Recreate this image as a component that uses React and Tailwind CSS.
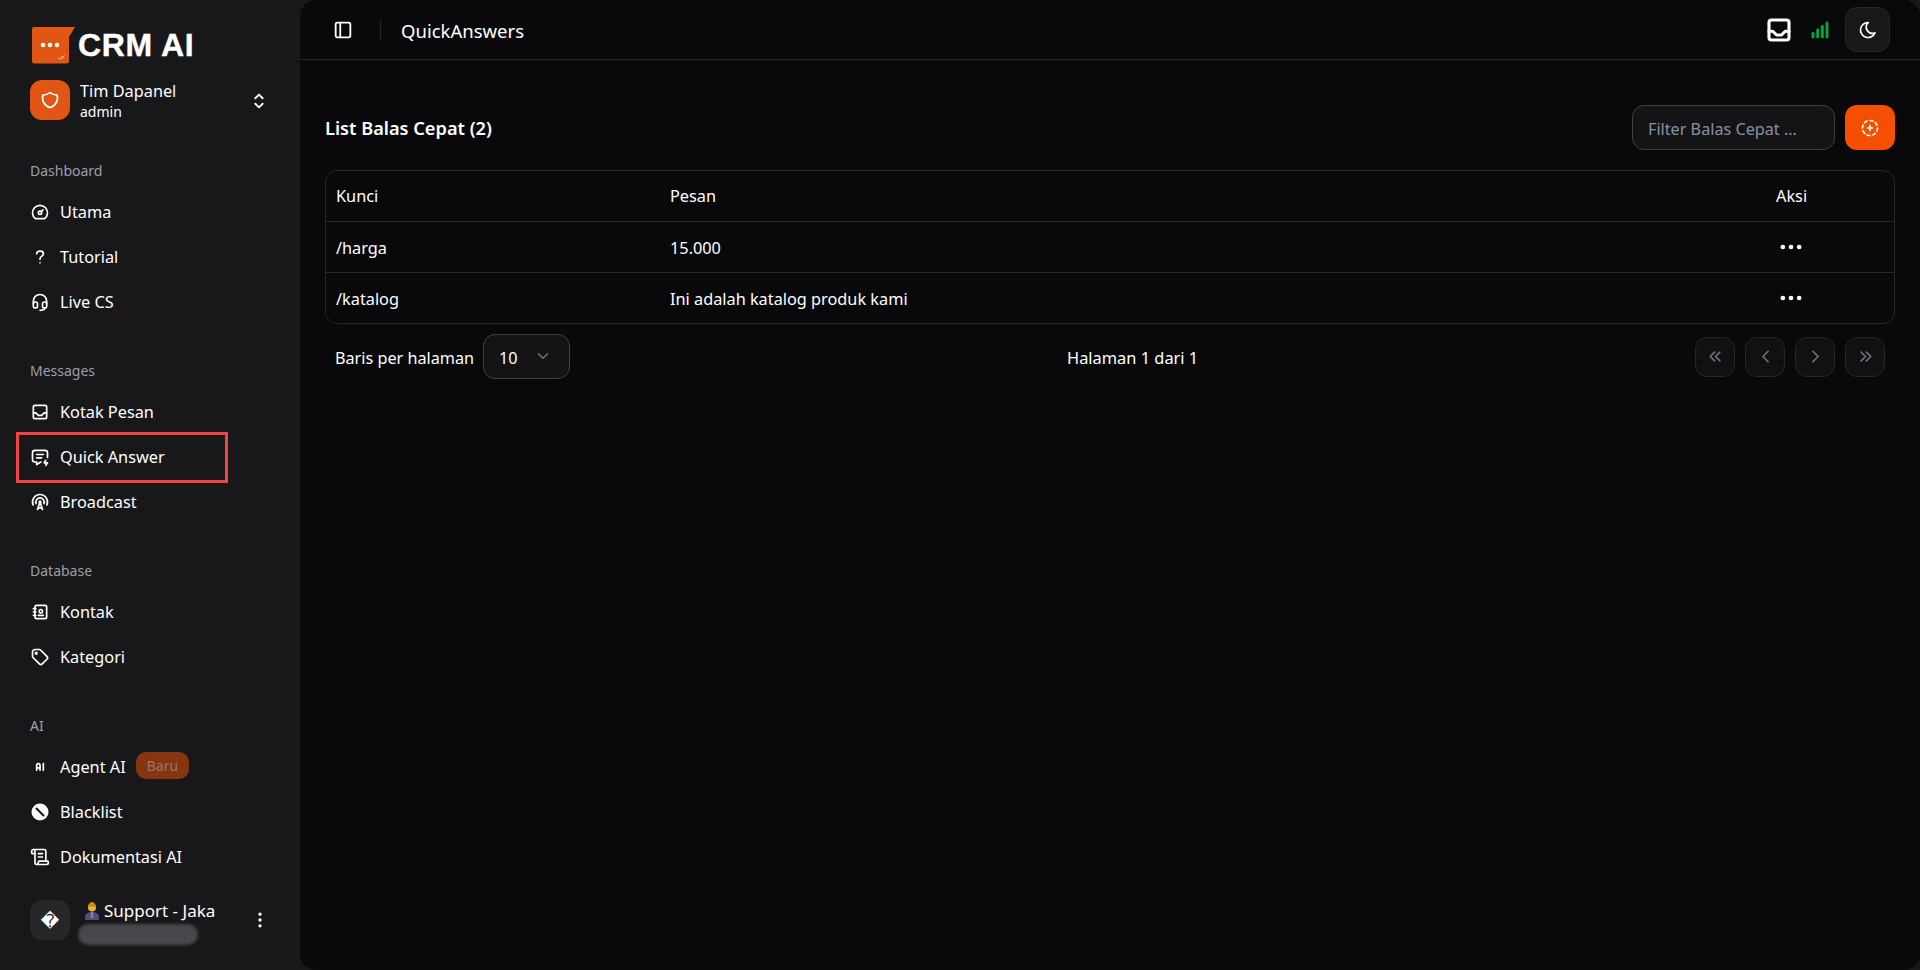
import {
  TbDashboard, TbQuestionMark, TbHeadset, TbInbox, TbMessageBolt, TbBuildingBroadcastTower, TbAddressBook, TbTag, TbAi,
  TbSelector, TbDotsVertical, TbDots, TbLayoutSidebar, TbAntennaBars5, TbMoon, TbCircleDashedPlus,
  TbChevronDown, TbChevronLeft, TbChevronRight, TbChevronsLeft, TbChevronsRight,
} from "react-icons/tb";
import { ScrollText } from "lucide-react";

function BlockedIcon({ className }) {
  return (
    <svg viewBox="0 0 20 20" className={className}>
      <circle cx="10" cy="10" r="8.500" fill="white" />
      <path d="M6.500 6.500 13.500 13.500" stroke="#18181b" strokeWidth="2" strokeLinecap="round" />
    </svg>
  );
}

function LogoMark() {
  return (
    <svg viewBox="0 0 43 37" className="w-[43px] h-[37px] shrink-0">
      <path d="M2 0H43L37 10V34a2.500 2.500 0 0 1-2.500 2.500H2.500A2.500 2.500 0 0 1 0 34V2a2 2 0 0 1 2-2Z" fill="#e05612" />
      <circle cx="11" cy="18" r="2.300" fill="white" />
      <circle cx="18" cy="18" r="2.300" fill="white" />
      <circle cx="25" cy="18" r="2.300" fill="white" />
      <path d="M26 31l1.500 1.500 3-3.500M29.500 32l3-3.500" stroke="#f3c9b0" strokeWidth="0.9" fill="none" />
    </svg>
  );
}

function WorkerEmoji() {
  return (
    <svg viewBox="0 0 16 18" className="w-[16px] h-[18px] shrink-0">
      <path d="M1 18v-3c0-3 3-5 7-5s7 2 7 5v3Z" fill="#5b4a78" />
      <path d="M7 10h2l.500 6h-3Z" fill="#8d7fa8" />
      <circle cx="8" cy="5.500" r="4" fill="#f0b429" />
      <path d="M4 5c0-3 2-5 4-5s4 2 4 5c-2 0-6-1-8 0Z" fill="#c98a16" />
    </svg>
  );
}

function NavItem({ icon: Icon, label, badge, marked }) {
  return (
    <div className="relative flex items-center gap-[10px] h-[37px] text-white text-[16.3px]">
      <Icon className="w-[20px] h-[20px] shrink-0 -translate-y-px" />
      <span>{label}</span>
      {badge && (
        <span className="px-[11px] h-[27px] flex items-center rounded-[10px] bg-[#86350f] text-[#94776a] text-[14px] -translate-y-[2px]">
          {badge}
        </span>
      )}
      {marked && <div className="absolute left-[-14px] top-[-7px] w-[212px] h-[51px] border-[3px] border-[#ef4444]" />}
    </div>
  );
}

function NavGroup({ title, children }) {
  return (
    <div>
      <div className="h-[20px] flex items-center text-[14px] text-[#9f9fa9]">{title}</div>
      <div className="mt-[14px] flex flex-col gap-2">{children}</div>
    </div>
  );
}

function PageButton({ icon: Icon }) {
  return (
    <button className="w-[40px] h-[40px] flex items-center justify-center rounded-xl border border-[#27272a] bg-[#111113] text-[#71717b]">
      <Icon className="w-[21px] h-[21px]" />
    </button>
  );
}

export default function App() {
  return (
    <div className="h-[970px] flex bg-[#18181b] text-white overflow-hidden font-['Noto_Sans','Open_Sans',sans-serif]">
      <aside className="w-[300px] shrink-0 px-[30px] flex flex-col">
        <div className="pt-[27px] pl-[2px] flex items-center gap-[3px]">
          <LogoMark />
          <span className="font-['Liberation_Sans',sans-serif] font-bold text-[32px] leading-[37px] tracking-[0.6px] [-webkit-text-stroke:0.4px_white]">CRM AI</span>
        </div>

        <div className="mt-[16px] flex items-center">
          <div className="w-[40px] h-[40px] rounded-xl bg-[#e05612] flex items-center justify-center">
            <svg viewBox="0 0 24 24" className="w-[20px] h-[20px]" fill="none" stroke="white" strokeWidth="2" strokeLinejoin="round">
              <path d="M12 3a12 12 0 0 0 8.500 3A12 12 0 0 1 12 21 12 12 0 0 1 3.500 6 12 12 0 0 0 12 3Z" />
            </svg>
          </div>
          <div className="ml-[10px] flex-1 translate-y-px">
            <div className="text-[16.3px] leading-[21px]">Tim Dapanel</div>
            <div className="text-[14px] leading-[19px]">admin</div>
          </div>
          <TbSelector className="w-[22px] h-[22px] translate-y-px" />
        </div>

        <div className="mt-[40px] flex flex-col gap-[39px]">
          <NavGroup title="Dashboard">
            <NavItem icon={TbDashboard} label="Utama" />
            <NavItem icon={TbQuestionMark} label="Tutorial" />
            <NavItem icon={TbHeadset} label="Live CS" />
          </NavGroup>
          <NavGroup title="Messages">
            <NavItem icon={TbInbox} label="Kotak Pesan" />
            <NavItem icon={TbMessageBolt} label="Quick Answer" marked />
            <NavItem icon={TbBuildingBroadcastTower} label="Broadcast" />
          </NavGroup>
          <NavGroup title="Database">
            <NavItem icon={TbAddressBook} label="Kontak" />
            <NavItem icon={TbTag} label="Kategori" />
          </NavGroup>
          <NavGroup title="AI">
            <NavItem icon={TbAi} label="Agent AI" badge="Baru" />
            <NavItem icon={BlockedIcon} label="Blacklist" />
            <NavItem icon={ScrollText} label="Dokumentasi AI" />
          </NavGroup>
        </div>

        <div className="mt-auto mb-[25px] flex items-start">
          <div className="w-[40px] h-[40px] rounded-xl bg-[#27272a] flex items-center justify-center text-[18px] font-['DejaVu_Sans',sans-serif]">
            �
          </div>
          <div className="ml-[8px] flex-1">
            <div className="pl-[6px] flex items-center gap-[4px] text-[17px] leading-[21px]">
              <WorkerEmoji />
              <span>Support - Jaka</span>
            </div>
            <div className="mt-[3px] w-[120px] h-[21px] rounded-full bg-[#47474c] blur-[1.5px]" />
          </div>
          <TbDotsVertical className="mt-[10px] w-[20px] h-[20px]" />
        </div>
      </aside>

      <main className="flex-1 bg-[#09090b] rounded-2xl min-w-0">
        <header className="h-[60px] border-b border-[#27272a] flex items-center pl-[32px] pr-[30px]">
          <TbLayoutSidebar className="w-[22px] h-[22px]" />
          <div className="ml-[26px] w-px h-[20px] bg-[#27272a]" />
          <div className="ml-[20px] text-[18.5px] pt-[2px]">QuickAnswers</div>
          <div className="ml-auto flex items-center">
            <TbInbox className="w-[30px] h-[30px] stroke-[2.500]" />
            <TbAntennaBars5 className="ml-[12px] w-[28px] h-[28px] text-[#00a63e] stroke-[2.500]" />
            <button className="ml-[11px] w-[45px] h-[45px] rounded-xl border border-[#27272a] bg-[#18181b] flex items-center justify-center">
              <TbMoon className="w-[20px] h-[20px]" />
            </button>
          </div>
        </header>

        <div className="px-[25px] pt-[45px]">
          <div className="flex items-center justify-between">
            <h1 className="text-[18.2px] font-semibold pt-[3px]">List Balas Cepat (2)</h1>
            <div className="flex gap-[10px]">
              <div className="w-[203px] h-[45px] pl-[15px] pt-[3px] rounded-xl border border-[#3f3f46] bg-[#141416] text-[#8492a6] text-[16.2px] flex items-center">
                Filter Balas Cepat ...
              </div>
              <button className="w-[50px] h-[45px] rounded-xl bg-[#f74f00] flex items-center justify-center">
                <TbCircleDashedPlus className="w-[20px] h-[20px]" />
              </button>
            </div>
          </div>

          <div className="mt-[20px] border border-[#27272a] rounded-xl">
            <div className="h-[51px] px-[10px] grid grid-cols-[334px_1106px_1fr] items-center border-b border-[#27272a] text-[16.3px]">
              <div>Kunci</div>
              <div>Pesan</div>
              <div>Aksi</div>
            </div>
            <div className="h-[51px] px-[10px] grid grid-cols-[334px_1106px_1fr] items-center border-b border-[#27272a] text-[16.3px]">
              <div className="pt-[2px]">/harga</div>
              <div className="pt-[2px]">15.000</div>
              <TbDots className="ml-[1px] w-[28px] h-[28px]" />
            </div>
            <div className="h-[50px] px-[10px] grid grid-cols-[334px_1106px_1fr] items-center text-[16.3px]">
              <div className="pt-[2px]">/katalog</div>
              <div className="pt-[2px]">Ini adalah katalog produk kami</div>
              <TbDots className="ml-[1px] w-[28px] h-[28px]" />
            </div>
          </div>

          <div className="mt-[10px] pl-[10px] pr-[10px] flex items-center justify-between relative">
            <div className="flex items-center gap-[9px] text-[16.2px]">
              <span className="pt-[3px]">Baris per halaman</span>
              <div className="w-[87px] h-[45px] pl-[15px] pt-[3px] rounded-xl border border-[#3f3f46] bg-[#141416] flex items-center">
                <span>10</span>
                <TbChevronDown className="ml-[16px] mt-[-5px] w-[18px] h-[18px] text-[#71717b]" />
              </div>
            </div>
            <div className="absolute left-[742px] pt-[3px] text-[16.4px]">Halaman 1 dari 1</div>
            <div className="flex gap-[10px]">
              <PageButton icon={TbChevronsLeft} />
              <PageButton icon={TbChevronLeft} />
              <PageButton icon={TbChevronRight} />
              <PageButton icon={TbChevronsRight} />
            </div>
          </div>
        </div>
      </main>
    </div>
  );
}
